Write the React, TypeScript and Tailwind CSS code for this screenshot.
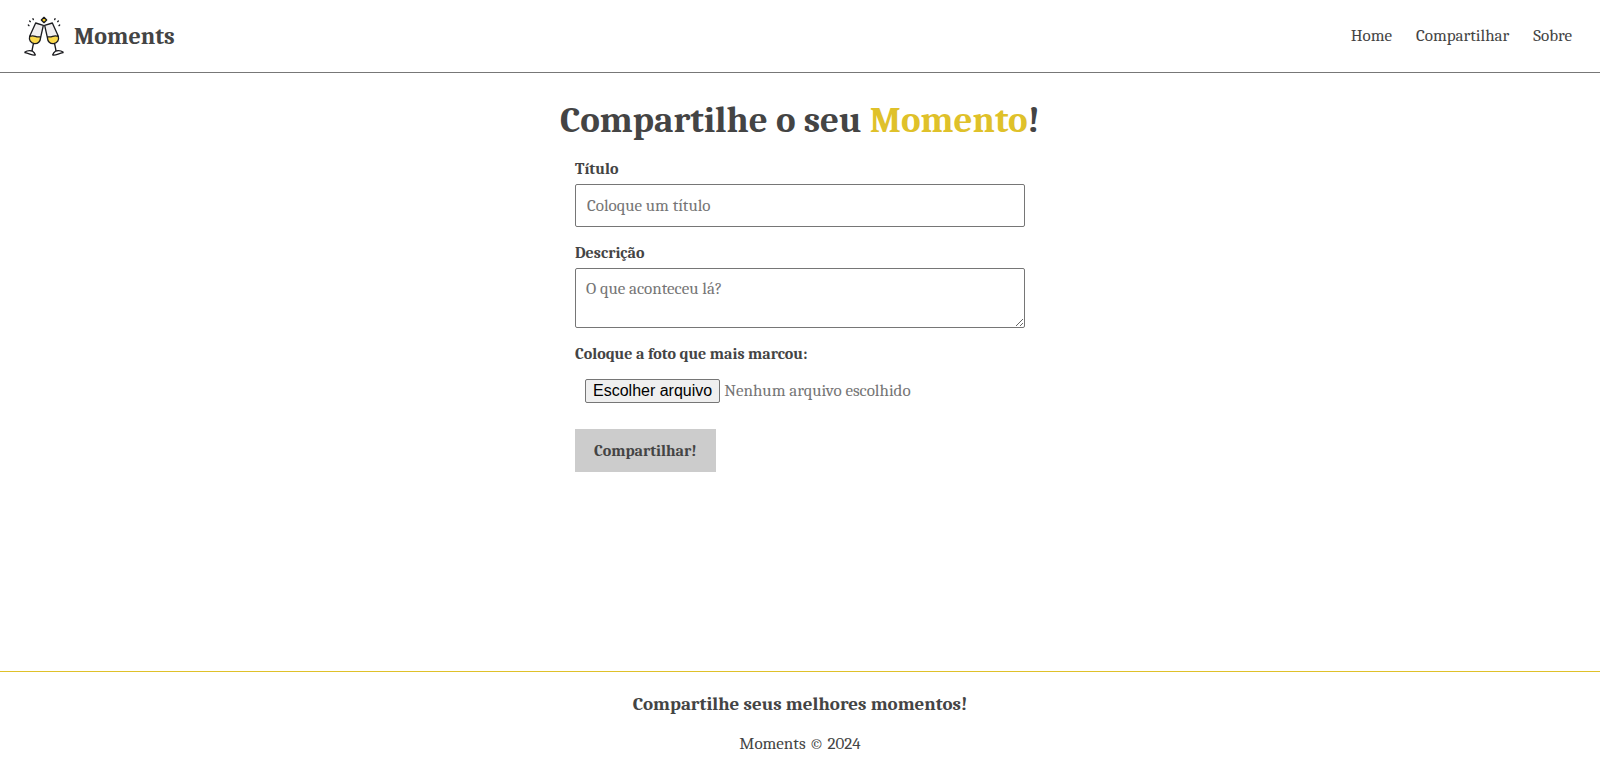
import { useState } from "react";

function Glass() {
  return (
    <g strokeLinejoin="round" strokeLinecap="round">
      <path d="M35 21 L58 28 L50 64 L18 62 Z" fill="#f1eff0" />
      <path d="M17 61 Q26 58 34 61 T50 62 C50 76 43 83 32 83 C21 82 15 73 17 61 Z" fill="#fbd94c" />
      <path d="M35 21 L58 28 L50 64 C49 77 42 84 31 83 C20 81 14 72 17 61 Z M17 61 Q26 58 34 61 T50 62 M28 84 L24 104" fill="none" stroke="#1b1b1f" strokeWidth="4" />
      <path d="M3 108 C10 103 18 103 25 105 C31 109 33 113 34 117 C26 120 16 112 3 110 Z" fill="#fff" stroke="#1b1b1f" strokeWidth="4" />
      <path d="M13 27 l2 2 M17 15 l2 2 M27 8 l1 3" stroke="#1b1b1f" strokeWidth="4" />
    </g>
  );
}

function Logo() {
  return (
    <svg viewBox="0 0 120 120" className="size-10" aria-hidden="true">
      <Glass />
      <g transform="translate(120 0) scale(-1 1)">
        <Glass />
      </g>
      <path d="M60 4 L68 12 L60 20 L52 12 Z" fill="#fbcf1f" stroke="#1b1b1f" strokeWidth="4" strokeLinejoin="round" />
    </svg>
  );
}

const links = ["Home", "Compartilhar", "Sobre"];

export default function App() {
  const [fileName, setFileName] = useState("");

  return (
    <div className="flex min-h-screen flex-col bg-white font-[Cambria,Caladea,'DejaVu_Serif_Condensed','DejaVu_Serif',serif] text-base leading-5 text-[#444]">
      <header className="flex items-center justify-between border-b border-[#777] px-6 py-4">
        <a href="#" className="flex items-center gap-2.5">
          <Logo />
          <span className="text-2xl leading-7 font-bold">Moments</span>
        </a>
        <nav className="flex gap-6 pr-1 text-[17px]">
          {links.map((link) => (
            <a key={link} href="#">{link}</a>
          ))}
        </nav>
      </header>

      <main className="flex flex-1 flex-col items-center px-4 pt-6">
        <h1 className="mb-4 text-[37px] leading-[46px] font-bold">
          Compartilhe o seu <span className="text-[#dfc12a]">Momento</span>!
        </h1>
        <form className="flex w-full max-w-[450px] flex-col items-start gap-4" onSubmit={(e) => e.preventDefault()}>
          <div className="flex w-full flex-col gap-[5px]">
            <label htmlFor="title" className="font-bold">Título</label>
            <input
              id="title"
              type="text"
              placeholder="Coloque um título"
              className="h-[43px] w-full rounded-xs border border-[#767676] px-[11px] text-[17px] placeholder:text-[#757575]"
            />
          </div>
          <div className="flex w-full flex-col gap-[5px]">
            <label htmlFor="description" className="font-bold">Descrição</label>
            <textarea
              id="description"
              rows={2}
              placeholder="O que aconteceu lá?"
              className="block h-15 w-full rounded-xs border border-[#767676] p-2.5 text-[17px] placeholder:text-[#757575]"
            />
          </div>
          <div className="flex w-full flex-col gap-[5px]">
            <label htmlFor="image" className="font-bold">Coloque a foto que mais marcou:</label>
            <div className="relative flex h-11 items-center px-2.5">
              <input
                id="image"
                type="file"
                className="sr-only"
                onChange={(e) => setFileName(e.target.files?.[0]?.name ?? "")}
              />
              <label htmlFor="image" className="flex items-center gap-1 text-[17px] text-[#757575]">
                <span className="rounded-xs border border-[#767676] bg-[#efefef] px-[7px] py-px font-['Liberation_Sans',Arial,sans-serif] text-base leading-5 text-black">
                  Escolher arquivo
                </span>
                {fileName || "Nenhum arquivo escolhido"}
              </label>
            </div>
          </div>
          <button type="submit" className="h-[43px] bg-[#ccc] px-[19px] font-bold">Compartilhar!</button>
        </form>
      </main>

      <footer className="flex flex-col items-center gap-4 border-t border-t-[#dfc12a] pt-5 pb-[17px]">
        <h2 className="text-[19px] leading-6 font-bold">Compartilhe seus melhores momentos!</h2>
        <p className="text-[17px] leading-6">Moments © 2024</p>
      </footer>
    </div>
  );
}
